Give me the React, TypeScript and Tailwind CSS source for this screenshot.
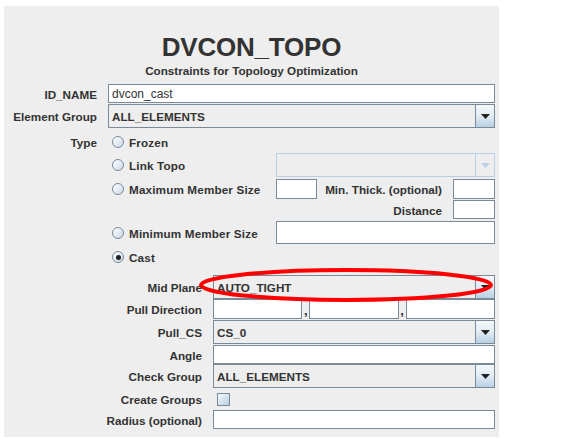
import React from "react";

const FONT = "font-['Liberation_Sans',Arial,Helvetica,sans-serif]";

function TextField({ className = "", value = "" }: { className?: string; value?: string }) {
  return (
    <div className={`bg-white border border-[#7a8a99] flex items-center pl-[3px] text-[12px] font-normal text-[#333] leading-none ${className}`}>
      {value}
    </div>
  );
}

function Arrow({ color = "#222" }: { color?: string }) {
  return (
    <svg width="9" height="5" viewBox="0 0 9 5">
      <polygon points="0,0 9,0 4.5,5" fill={color} />
    </svg>
  );
}

function Combo({ value = "", className = "", disabled = false }: { value?: string; className?: string; disabled?: boolean }) {
  if (disabled) {
    return (
      <div className={`flex border border-[#b8cfe5] bg-[#eeeeee] ${className}`}>
        <div className="flex-1" />
        <div className="w-[19px] border-l border-[#b8cfe5] flex items-center justify-center">
          <Arrow color="#b8cfe5" />
        </div>
      </div>
    );
  }
  return (
    <div className={`flex border border-[#7a8a99] bg-[#eeeeee] ${className}`}>
      <div className="flex-1 flex items-center pl-[3px] pt-[1px] text-[11.7px] font-bold text-[#333]">{value}</div>
      <div className="w-[19px] border-l border-[#7a8a99] flex items-center justify-center bg-gradient-to-b from-[#f4f8fb] via-[#e2ebf4] to-[#b8cfe5]">
        <Arrow />
      </div>
    </div>
  );
}

function Radio({ checked = false }: { checked?: boolean }) {
  return (
    <div className="w-[12px] h-[12px] rounded-full border border-[#7a8a99] bg-gradient-to-br from-[#ffffff] to-[#c8d8e8] flex items-center justify-center shrink-0">
      {checked && <div className="w-[5px] h-[5px] rounded-full bg-[#222]" />}
    </div>
  );
}

function Label({ children, className = "" }: { children: React.ReactNode; className?: string }) {
  return <div className={`text-[11.7px] font-bold text-[#333] leading-[14px] pt-[2px] whitespace-nowrap ${className}`}>{children}</div>;
}

function UpperRow({ label, h, children }: { label: string; h: string; children: React.ReactNode }) {
  return (
    <div className={`flex items-center pr-[4px] ${h}`}>
      <Label className="w-[93px] text-right">{label}</Label>
      <div className="ml-[11px] flex-1 flex items-center h-full">{children}</div>
    </div>
  );
}

function LowerRow({ label, h, children }: { label: string; h: string; children: React.ReactNode }) {
  return (
    <div className={`flex items-center pr-[4px] ${h}`}>
      <Label className="w-[198px] text-right">{label}</Label>
      <div className="ml-[11px] flex-1 flex items-center h-full">{children}</div>
    </div>
  );
}

function RadioItem({ label, checked = false }: { label: string; checked?: boolean }) {
  return (
    <div className="flex items-center gap-[5px]">
      <Radio checked={checked} />
      <Label className="tracking-[0.15px]">{label}</Label>
    </div>
  );
}

export default function App() {
  return (
    <div className={`w-[572px] h-[441px] bg-white pt-[6px] pl-[4px] ${FONT}`}>
      <div className="w-[495px] h-[431px] bg-[#eeeeee] relative flex flex-col">
        <div className="pt-[26px] h-[56px] text-center text-[26px] font-bold leading-[30px] text-[#333] tracking-[-0.2px]">
          DVCON_TOPO
        </div>
        <div className="mt-[2px] h-[14px] text-center text-[11.7px] font-bold leading-[14px] text-[#333]">
          Constraints for Topology Optimization
        </div>
        <div className="h-[6px]" />
        <UpperRow label="ID_NAME" h="h-[19px]">
          <TextField className="w-full h-[19px]" value="dvcon_cast" />
        </UpperRow>
        <div className="h-[1px]" />
        <UpperRow label="Element Group" h="h-[24px]">
          <Combo className="w-full h-[24px]" value="ALL_ELEMENTS" />
        </UpperRow>
        <div className="h-[2px]" />
        <div className="flex items-center h-[23px]">
          <Label className="w-[93px] text-right">Type</Label>
          <div className="ml-[15px]">
            <RadioItem label="Frozen" />
          </div>
        </div>
        <div className="flex items-center h-[24px] pr-[4px]">
          <div className="w-[272px] pl-[108px]">
            <RadioItem label="Link Topo" />
          </div>
          <Combo disabled className="flex-1 h-[24px]" />
        </div>
        <div className="flex items-center h-[23px] pr-[4px]">
          <div className="w-[272px] pl-[108px]">
            <RadioItem label="Maximum Member Size" />
          </div>
          <TextField className="w-[41px] h-[20px]" />
          <Label className="flex-1 text-right pr-[11px]">Min. Thick. (optional)</Label>
          <TextField className="w-[42px] h-[20px]" />
        </div>
        <div className="flex items-center justify-end h-[19px] pr-[4px]">
          <Label className="pr-[11px]">Distance</Label>
          <TextField className="w-[42px] h-[19px]" />
        </div>
        <div className="h-[2px]" />
        <div className="flex items-center h-[23px] pr-[4px]">
          <div className="w-[272px] pl-[108px]">
            <RadioItem label="Minimum Member Size" />
          </div>
          <TextField className="flex-1 h-[23px]" />
        </div>
        <div className="flex items-center h-[26px] pl-[108px]">
          <RadioItem label="Cast" checked />
        </div>
        <div className="h-[5px]" />
        <LowerRow label="Mid Plane" h="h-[24px]">
          <Combo className="w-full h-[24px]" value="AUTO_TIGHT" />
        </LowerRow>
        <LowerRow label="Pull Direction" h="h-[20px]">
          <div className="flex w-full items-end h-[20px]">
            <TextField className="flex-1 h-[20px]" />
            <span className="w-[7px] text-center text-[13px] font-bold leading-[16px] text-[#333]">,</span>
            <TextField className="flex-1 h-[20px]" />
            <span className="w-[7px] text-center text-[13px] font-bold leading-[16px] text-[#333]">,</span>
            <TextField className="flex-1 h-[20px]" />
          </div>
        </LowerRow>
        <div className="h-[1px]" />
        <LowerRow label="Pull_CS" h="h-[24px]">
          <Combo className="w-full h-[24px]" value="CS_0" />
        </LowerRow>
        <div className="h-[1px]" />
        <LowerRow label="Angle" h="h-[19px]">
          <TextField className="w-full h-[19px]" />
        </LowerRow>
        <LowerRow label="Check Group" h="h-[24px]">
          <Combo className="w-full h-[24px]" value="ALL_ELEMENTS" />
        </LowerRow>
        <LowerRow label="Create Groups" h="h-[22px]">
          <div className="ml-[4px] w-[13px] h-[13px] border border-[#7a8a99] bg-gradient-to-br from-[#f4f8fb] to-[#b8cfe5]" />
        </LowerRow>
        <LowerRow label="Radius (optional)" h="h-[19px]">
          <TextField className="w-full h-[19px]" />
        </LowerRow>

        <svg className="absolute left-0 top-0 pointer-events-none" width="495" height="431">
          <ellipse cx="342" cy="279" rx="145" ry="15" fill="none" stroke="#ff0000" strokeWidth="4" />
        </svg>
      </div>
    </div>
  );
}
